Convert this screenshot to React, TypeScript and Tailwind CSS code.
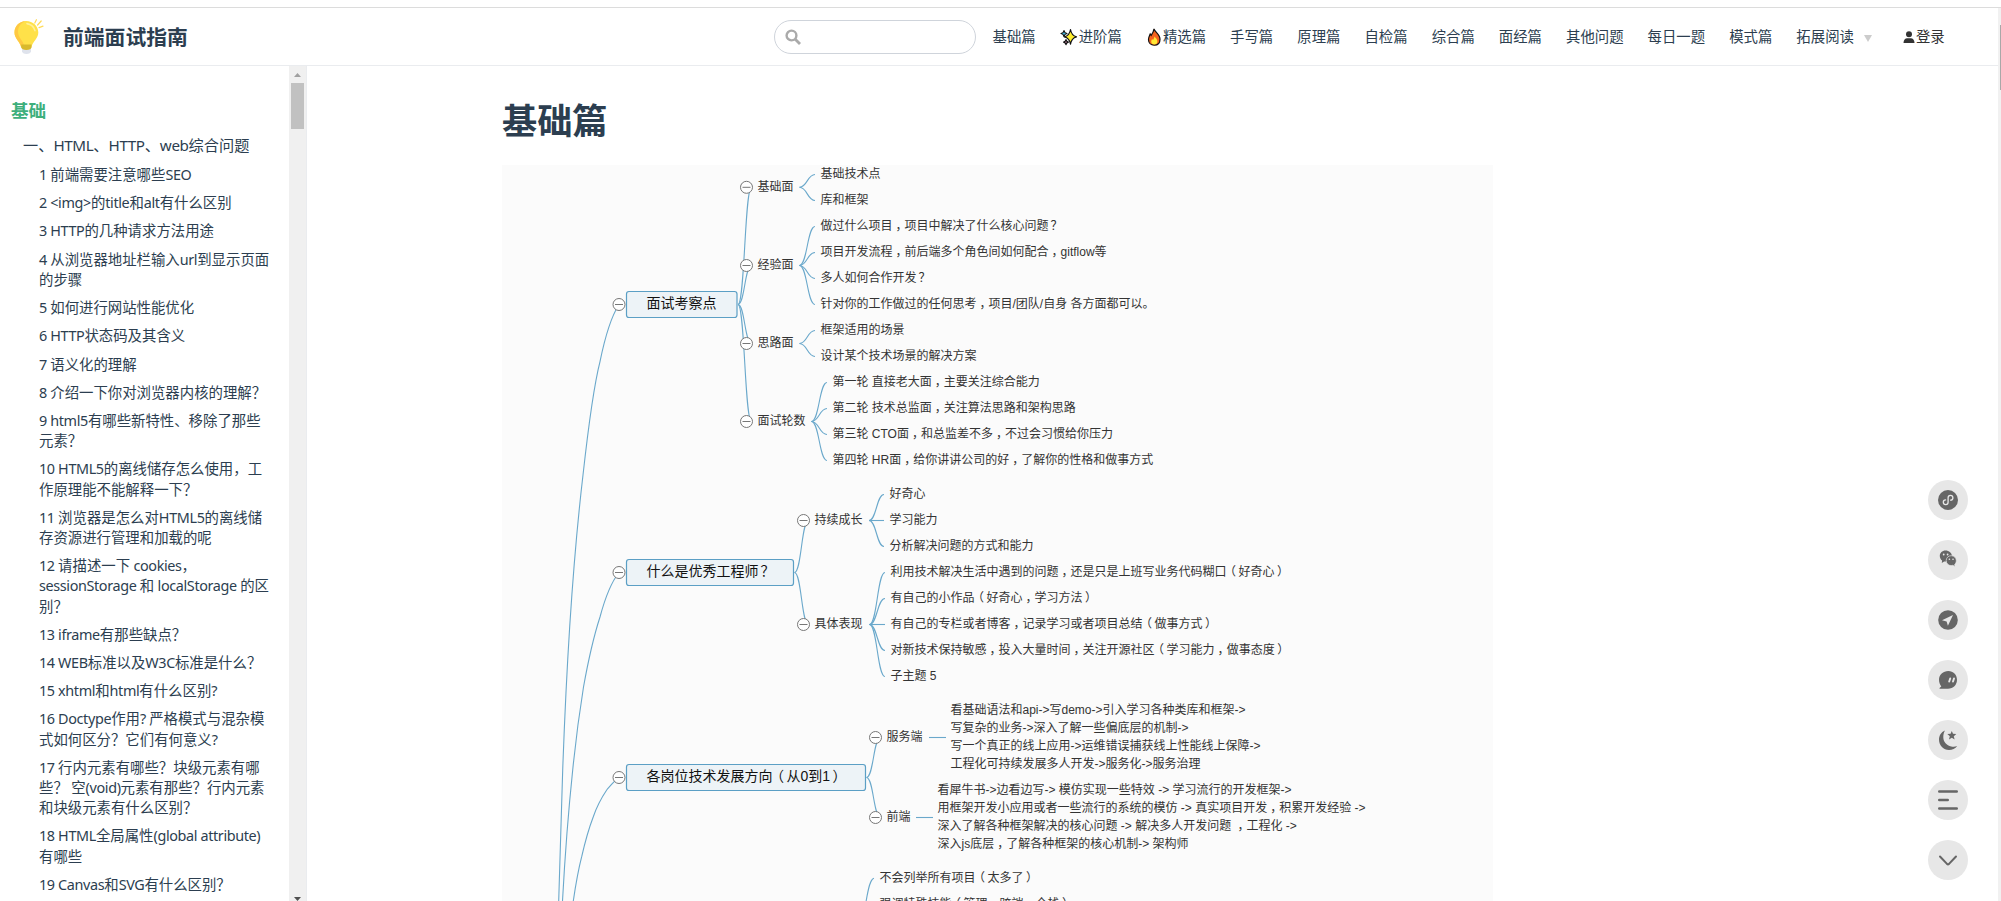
import { ReactNode } from "react";

const sidebarItems: string[][] = [
  ["1 前端需要注意哪些SEO"],
  ["2 <img>的title和alt有什么区别"],
  ["3 HTTP的几种请求方法用途"],
  ["4 从浏览器地址栏输入url到显示页面", "的步骤"],
  ["5 如何进行网站性能优化"],
  ["6 HTTP状态码及其含义"],
  ["7 语义化的理解"],
  ["8 介绍一下你对浏览器内核的理解？"],
  ["9 html5有哪些新特性、移除了那些", "元素？"],
  ["10 HTML5的离线储存怎么使用，工", "作原理能不能解释一下？"],
  ["11 浏览器是怎么对HTML5的离线储", "存资源进行管理和加载的呢"],
  ["12 请描述一下 cookies，", "sessionStorage 和 localStorage 的区", "别？"],
  ["13 iframe有那些缺点？"],
  ["14 WEB标准以及W3C标准是什么？"],
  ["15 xhtml和html有什么区别?"],
  ["16 Doctype作用? 严格模式与混杂模", "式如何区分？它们有何意义?"],
  ["17 行内元素有哪些？块级元素有哪", "些？ 空(void)元素有那些？行内元素", "和块级元素有什么区别？"],
  ["18 HTML全局属性(global attribute)", "有哪些"],
  ["19 Canvas和SVG有什么区别？"],
];

const navItems: { label: string; icon?: ReactNode }[] = [
  { label: "基础篇" },
  { label: "进阶篇", icon: <SparklesIcon /> },
  { label: "精选篇", icon: <FireIcon /> },
  { label: "手写篇" },
  { label: "原理篇" },
  { label: "自检篇" },
  { label: "综合篇" },
  { label: "面经篇" },
  { label: "其他问题" },
  { label: "每日一题" },
  { label: "模式篇" },
];

function BulbIcon() {
  return (
    <svg className="w-[30px] h-9 shrink-0" viewBox="0 0 30 36">
      <path d="M8 26h9v6.2c0 1.500-2 2.800-4.500 2.800S8 33.700 8 32.200z" fill="#dfe3ec" />
      <path d="M12.200 2C5.600 2 .5 7 .5 13.400c0 6.300 5.400 8.600 6.600 14.600h10.400c1.200-6 6.800-8.300 6.800-14.600C24.300 7 18.800 2 12.200 2z" fill="#ffe149" />
      <path d="M12.200 2C5.600 2 .5 7 .5 13.400c0 6.300 5.400 8.600 6.600 14.600h3.400C9.400 21 4 19.500 4 12.600 4 7.400 7.600 3.200 12.200 2z" fill="#ffc843" />
      <path d="M13 4.600c3.800.6 7 3.400 8 7" fill="none" stroke="#fff09a" strokeWidth="1.600" strokeLinecap="round" />
      <path d="M7.200 25.500h10.300v2.800c0 1.500-2.200 2.700-5.100 2.700s-5.200-1.200-5.200-2.700z" fill="#d9b92c" />
      <path d="M20.800 4l1.600-3.300M23.600 6l3.600-4M25 8.600l4-1.500" stroke="#ffdb57" strokeWidth="1.200" strokeLinecap="round" />
    </svg>
  );
}

function SparklesIcon() {
  return (
    <svg className="w-[18px] h-[18px] mr-px" viewBox="0 0 18 18" stroke="#111" strokeWidth="1.200" strokeLinejoin="round">
      <path d="M10.500 1.500c.7 4.500 2 6.300 6 7.300-4 1-5.300 2.900-6 7.400-.7-4.500-2-6.400-6-7.400 4-1 5.300-2.800 6-7.300z" fill="#ffee2e" />
      <path d="M4 2.500c.3 1.900 1 2.600 3 3-2 .4-2.700 1.200-3 3.100-.3-1.900-1-2.700-3-3.100 2-.4 2.700-1.100 3-3z" fill="#3bb3e0" />
      <path d="M6 11.500c.2 1.600.8 2.200 2.400 2.600-1.600.3-2.200 1-2.400 2.500-.2-1.500-.8-2.200-2.400-2.500 1.600-.4 2.200-1 2.400-2.600z" fill="#f49ac8" />
    </svg>
  );
}

function FireIcon() {
  return (
    <svg className="w-[17px] h-[18px]" viewBox="0 0 17 18">
      <path d="M8 .8c.5 3 6 5.200 6 10.400 0 3.600-2.300 6-5.700 6-3.500 0-5.800-2.400-5.800-5.800 0-2.300 1-3.700 1.700-5.400l1 1.400C6.700 5.200 7.600 3.500 8 .8z" fill="#f4621c" stroke="#111" strokeWidth="1.200" />
      <path d="M8.400 8.500c1.500 1.600 3 2.900 3 5 0 1.900-1.300 3-3.100 3s-3.100-1.200-3.100-3c0-.9.400-1.700.9-2.400l.9.900c.8-1.100 1.300-2.100 1.400-3.500z" fill="#ffe935" />
    </svg>
  );
}

function Header() {
  return (
    <header className="flex items-center h-[66px] shrink-0 pt-2 border-b border-[#eaecef] relative">
      <div className="absolute inset-x-0 top-[7px] h-px bg-[#dcdcdc]" />
      <div className="flex items-center pl-3.5 w-[773.500px]">
        <BulbIcon />
        <span className="pl-[19px] pt-0.5 text-[20.800px] font-bold leading-none">前端面试指南</span>
      </div>
      <div className="flex items-center w-[202px] h-[34px] rounded-full border border-[#cfd4db] pl-2.5">
        <svg className="w-4 h-4" viewBox="0 0 16 16" fill="none" stroke="#aaa" strokeWidth="2.400">
          <circle cx="6.500" cy="6.500" r="4.900" />
          <path d="M10 10l5 5" strokeWidth="2.800" />
        </svg>
      </div>
      <nav className="flex items-center gap-6 pl-[17px] pt-px text-[14.400px] leading-none whitespace-nowrap">
        {navItems.map((item) => (
          <a key={item.label} className="flex items-center">
            {item.icon}
            {item.label}
          </a>
        ))}
        <a className="flex items-center">
          拓展阅读
          <svg className="w-2 h-[7px] ml-2.5 mt-0.5" viewBox="0 0 8 7">
            <path d="M0 0h8L4 7z" fill="#ccc" />
          </svg>
        </a>
        <a className="flex items-center ml-[7px] text-[#333]">
          <svg className="w-3 h-3 mr-px" viewBox="0 0 12 12" fill="#333">
            <circle cx="6" cy="3.200" r="3" />
            <path d="M.5 12c0-3.200 1.700-4.800 3.700-4.800h3.600c2 0 3.700 1.600 3.700 4.800z" />
          </svg>
          登录
        </a>
      </nav>
    </header>
  );
}

// tightens only the latin runs, the CJK glyphs keep their full advance
function MixedText({ text }: { text: string }) {
  return (
    <>
      {text.split(/([\x20-\x7e]+)/).map((part, i) =>
        i % 2 ? <span key={i} className="tracking-[-0.37px]">{part}</span> : part
      )}
    </>
  );
}

function Sidebar() {
  return (
    <aside className="flex w-[307px] shrink-0 border-r border-[#eaecef] overflow-hidden">
      <div className="flex-1 pt-[33px] whitespace-nowrap">
        <p className="pl-[11px] text-[17.600px] leading-[22px] font-bold text-[#3eaf7c]">基础</p>
        <p className="pl-[23px] mt-3.5 mb-[5px] text-[15.200px] leading-[21px]">
          <MixedText text="一、HTML、HTTP、web综合问题" />
        </p>
        <ul className="pl-[39px] text-[14.400px] leading-[20.200px]">
          {sidebarItems.map((lines) => (
            <li key={lines[0]} className="py-[4.020px]">
              {lines.map((line) => (
                <span key={line} className="block h-[20.200px]">
                  <MixedText text={line} />
                </span>
              ))}
            </li>
          ))}
        </ul>
      </div>
      <div className="flex flex-col items-center w-[17px] bg-[#f0f0f0]">
        <svg className="w-[7px] h-1 mt-[7px] shrink-0" viewBox="0 0 7 4">
          <path d="M0 4h7L3.500 0z" fill="#a0a0a0" />
        </svg>
        <div className="w-[13px] h-[46px] mt-1.5 bg-[#c1c1c1] shrink-0" />
        <svg className="w-[7px] h-1 mt-auto shrink-0" viewBox="0 0 7 4">
          <path d="M0 0h7L3.500 4z" fill="#505050" />
        </svg>
      </div>
    </aside>
  );
}

type Leaf = { y: number; text: string };
type Branch = { x: number; y: number; label: string; stemX: number; leafX: number; leaves: Leaf[] };
type Topic = { y: number; right: number; label: string; branches: Branch[] };

const topics: Topic[] = [
  {
    y: 304.5,
    right: 737,
    label: "面试考察点",
    branches: [
      {
        x: 746.5, y: 187.3, label: "基础面", stemX: 799.5, leafX: 820.5,
        leaves: [
          { y: 174.5, text: "基础技术点" },
          { y: 200.5, text: "库和框架" },
        ],
      },
      {
        x: 746.5, y: 265.5, label: "经验面", stemX: 799.5, leafX: 820.5,
        leaves: [
          { y: 226.5, text: "做过什么项目，项目中解决了什么核心问题？" },
          { y: 252.5, text: "项目开发流程，前后端多个角色间如何配合，gitflow等" },
          { y: 278.5, text: "多人如何合作开发？" },
          { y: 304.5, text: "针对你的工作做过的任何思考，项目/团队/自身 各方面都可以。" },
        ],
      },
      {
        x: 746.5, y: 343.5, label: "思路面", stemX: 799.5, leafX: 820.5,
        leaves: [
          { y: 330.5, text: "框架适用的场景" },
          { y: 356.5, text: "设计某个技术场景的解决方案" },
        ],
      },
      {
        x: 746.5, y: 421.5, label: "面试轮数", stemX: 811.5, leafX: 832.5,
        leaves: [
          { y: 382.5, text: "第一轮 直接老大面，主要关注综合能力" },
          { y: 408.5, text: "第二轮 技术总监面，关注算法思路和架构思路" },
          { y: 434.5, text: "第三轮 CTO面，和总监差不多，不过会习惯给你压力" },
          { y: 460.5, text: "第四轮 HR面，给你讲讲公司的好，了解你的性格和做事方式" },
        ],
      },
    ],
  },
  {
    y: 572.5,
    right: 793.5,
    label: "什么是优秀工程师？",
    branches: [
      {
        x: 803.5, y: 520.5, label: "持续成长", stemX: 869, leafX: 889.5,
        leaves: [
          { y: 494.5, text: "好奇心" },
          { y: 520.5, text: "学习能力" },
          { y: 546.5, text: "分析解决问题的方式和能力" },
        ],
      },
      {
        x: 803.5, y: 624.5, label: "具体表现", stemX: 869.5, leafX: 890.5,
        leaves: [
          { y: 572.5, text: "利用技术解决生活中遇到的问题，还是只是上班写业务代码糊口（好奇心）" },
          { y: 598.5, text: "有自己的小作品（好奇心，学习方法）" },
          { y: 624.5, text: "有自己的专栏或者博客，记录学习或者项目总结（做事方式）" },
          { y: 650.5, text: "对新技术保持敏感，投入大量时间，关注开源社区（学习能力，做事态度）" },
          { y: 676.5, text: "子主题 5" },
        ],
      },
    ],
  },
  {
    y: 777.5,
    right: 865.5,
    label: "各岗位技术发展方向（从0到1）",
    branches: [
      { x: 875.5, y: 737.5, label: "服务端", stemX: 929, leafX: 950.5, leaves: [] },
      { x: 875.5, y: 817.5, label: "前端", stemX: 916, leafX: 937.5, leaves: [] },
    ],
  },
];

// multi-line leaves hang off a single straight stem
const notes = [
  {
    x: 950.5,
    y: 710.5,
    lines: [
      "看基础语法和api->写demo->引入学习各种类库和框架->",
      "写复杂的业务->深入了解一些偏底层的机制->",
      "写一个真正的线上应用->运维错误捕获线上性能线上保障->",
      "工程化可持续发展多人开发->服务化->服务治理",
    ],
  },
  {
    x: 937.5,
    y: 790.5,
    lines: [
      "看犀牛书->边看边写-> 模仿实现一些特效 -> 学习流行的开发框架->",
      "用框架开发小应用或者一些流行的系统的模仿 -> 真实项目开发，积累开发经验 ->",
      "深入了解各种框架解决的核心问题 -> 解决多人开发问题 ，工程化 ->",
      "深入js底层，了解各种框架的核心机制-> 架构师",
    ],
  },
];

const rootLines = [
  "M558.700 901C560 855 561.200 812 562.700 770C567 650 573 560 583 475C588 430 593.500 387 600 361.600C604 342 609 320 619 304.500",
  "M562.500 901C565 855 568.500 810 572.700 770C575.500 742 579 715 583.500 687C588 662 593.500 637 600 617C604 602 609 585 619 572.500",
  "M573.300 901C575.500 886 578 871 581.700 856.700C585 842 589 828 593.300 816.700C597 806 602 797 606.700 790C611 785 614 781 619 777.500",
];

function curve(x1: number, y1: number, x2: number, y2: number) {
  const mid = (x1 + x2) / 2;
  return `M${x1} ${y1}C${mid} ${y1} ${mid} ${y2} ${x2} ${y2}`;
}

// fullwidth punctuation sits in the middle of its cell
const punctuationShift: Record<string, number> = { "，": 3, "？": 2, "（": -2.5, "）": 2.5 };

function MapText({ x, y, size = 12, fill = "#333", children }: { x: number; y: number; size?: number; fill?: string; children: string }) {
  let shift = 0;
  return (
    <text x={x} y={y} fontSize={size} fill={fill} style={{ whiteSpace: "pre" }}>
      {children.split(/([，？（）])/).filter(Boolean).map((part, i) => {
        const next = punctuationShift[part] ?? 0;
        const dx = next - shift;
        shift = next;
        return <tspan key={i} dx={dx}>{part}</tspan>;
      })}
    </text>
  );
}

function Toggle({ x, y }: { x: number; y: number }) {
  return (
    <g stroke="#777" strokeWidth="1" fill="#fff">
      <circle cx={x} cy={y} r="6" />
      <path d={`M${x - 4} ${y}h8`} />
    </g>
  );
}

function MindMap() {
  return (
    <svg className="w-[991px] h-[736px] bg-[#fbfbfb] font-['Liberation_Sans','Noto_Sans_CJK_SC',sans-serif]" viewBox="502 165 991 736">
      <g fill="none" stroke="#6aa8cb" strokeWidth="1.100">
        {rootLines.map((d) => (
          <path key={d} d={d} />
        ))}
        {topics.map((topic) =>
          topic.branches.map((b) => (
            <g key={b.label}>
              <path d={curve(topic.right + 1, topic.y, b.x + 5, b.y)} />
              {b.leaves.map((leaf) => (
                <path key={leaf.text} d={curve(b.stemX, b.y, b.leafX - 5.5, leaf.y)} />
              ))}
              {b.leaves.length === 0 && <path d={`M${b.stemX} ${b.y}h17`} />}
            </g>
          ))
        )}
        <path d="M866 902C868 890 870 879 874 878.300" />
      </g>
      {topics.map((topic) => (
        <g key={topic.label}>
          <rect x="626.500" y={topic.y - 13} width={topic.right - 626.5} height="26" rx="2.500" fill="#edf3f7" stroke="#5b9fc5" strokeWidth="1.200" />
          <MapText x={646.5} y={topic.y + 3.8} size={14} fill="#111">{topic.label}</MapText>
          <Toggle x={619} y={topic.y} />
          {topic.branches.map((b) => (
            <g key={b.label}>
              <Toggle x={b.x} y={b.y} />
              <MapText x={b.x + 11} y={b.y + 3.5}>{b.label}</MapText>
              {b.leaves.map((leaf) => (
                <MapText key={leaf.text} x={b.leafX} y={leaf.y + 3.5}>{leaf.text}</MapText>
              ))}
            </g>
          ))}
        </g>
      ))}
      {notes.map((note) =>
        note.lines.map((line, i) => (
          <MapText key={line} x={note.x} y={note.y + i * 18 + 3.5}>{line}</MapText>
        ))
      )}
      <MapText x={879.5} y={882}>不会列举所有项目（太多了）</MapText>
      <MapText x={879.5} y={908}>强调特殊技能（管理，跨端，全栈）</MapText>
    </svg>
  );
}

const floatIcons: ReactNode[] = [
  <svg key="mini" className="w-5 h-5" viewBox="0 0 20 20">
    <circle cx="10" cy="10" r="10" fill="#666" />
    <path d="M7.600 9.800a2.400 2.400 0 1 0 2.500 2.400V7.800a2.400 2.400 0 1 1 2.500 2.400" fill="none" stroke="#e7e7e7" strokeWidth="1.300" strokeLinecap="round" />
  </svg>,
  <svg key="wechat" className="w-5 h-5" viewBox="0 0 20 20">
    <path d="M7.500.5C4.200.5 1.800 2.900 1.800 6c0 1.900.9 3.500 2.300 4.500L3.800 13l2.300-1.500h2.400L14 6.500C14 3 11 .5 7.500.5z" fill="#666" />
    <path d="M13.200 5.700c-2.900 0-5 2.100-5 4.900s2.100 5 5 5c.6 0 1.200-.1 1.700-.3l2.100 1.400-.3-2.300c1-.9 1.600-2.200 1.600-3.800 0-2.800-2.200-4.900-5.100-4.900z" fill="#666" stroke="#e7e7e7" strokeWidth=".7" />
    <g fill="#e7e7e7">
      <circle cx="5.700" cy="4.500" r=".9" />
      <circle cx="9.600" cy="4.500" r=".9" />
      <circle cx="11.400" cy="9.300" r=".8" />
      <circle cx="15" cy="9.300" r=".8" />
    </g>
  </svg>,
  <svg key="nav" className="w-5 h-5" viewBox="0 0 20 20">
    <circle cx="10" cy="10" r="9.800" fill="#666" />
    <path d="M15 5L4 10.200l4.600 1.200 1.300 4.400z" fill="#e7e7e7" />
  </svg>,
  <svg key="chat" className="w-5 h-5" viewBox="0 0 20 20">
    <path d="M10.300 1C15.300 1 19 4.800 19 9.800c0 5.200-3.800 9-9 9H2.200c-.8 0-.9-.7-.4-1.100l1.500-1.200C2 14.700 1 12.500 1 9.800 1 4.800 5.200 1 10.300 1z" fill="#666" />
    <path d="M12.200 8.500l-1 3M16 8.500l-1 3" stroke="#e7e7e7" strokeWidth="1.900" strokeLinecap="round" />
  </svg>,
  <svg key="moon" className="w-5 h-5" viewBox="0 0 20 20" fill="#666">
    <path d="M7 .5C2.900 2.200 1 5.800 1 9.800 1 15.500 5.500 20 11 20c3.300 0 6.300-1.400 8.200-3.900-2 .7-4 .8-6 .3C8.500 15.500 5.500 12 5.300 7.500 5.200 5 5.800 2.500 7 .5z" />
    <path d="M13.800 1l1.200 2.800 3.300.3-2.500 2.100.8 3.200-2.800-1.700L11 9.400l.8-3.200-2.500-2.100 3.300-.3z" />
  </svg>,
  <svg key="list" className="w-5 h-5" viewBox="0 0 20 20" stroke="#666" strokeWidth="2.400" strokeLinecap="round">
    <path d="M1.200 1.500h17.600M1.200 10h8.600M1.200 18.500h17.600" />
  </svg>,
  <svg key="down" className="w-5 h-5" viewBox="0 0 20 20" fill="none" stroke="#666" strokeWidth="2" strokeLinecap="round" strokeLinejoin="round">
    <path d="M2 6.500l7 7.400q1 .9 2 0l7-7.400" />
  </svg>,
];

export default function App() {
  return (
    <div className="relative flex flex-col w-[2001px] h-[901px] overflow-hidden bg-white text-[#2c3e50] font-['Noto_Sans','Noto_Sans_CJK_SC',sans-serif]">
      <Header />
      <div className="flex flex-1 min-h-0">
        <Sidebar />
        <main className="pl-[195px] pt-8">
          <h1 className="h-[67px] text-[35.200px] leading-[44px] font-bold">基础篇</h1>
          <MindMap />
        </main>
      </div>

      <div className="absolute right-[33px] top-[480px] flex flex-col gap-5">
        {floatIcons.map((icon, i) => (
          <button key={i} className="flex items-center justify-center w-10 h-10 rounded-full bg-[#e7e7e7] text-[#666]">
            {icon}
          </button>
        ))}
      </div>
      <div className="absolute right-0 top-2 bottom-0 w-[3px] bg-[#f1f1f1]">
        <div className="ml-auto mt-[17px] w-px h-[65px] bg-[#a8a8a8]" />
      </div>
    </div>
  );
}
